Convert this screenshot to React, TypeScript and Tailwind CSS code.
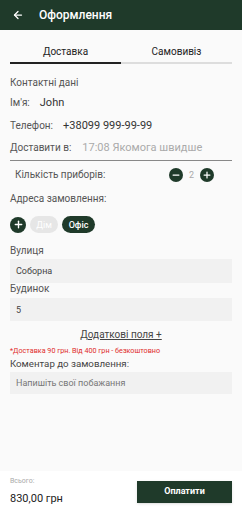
import { ArrowLeft, Plus, Minus } from "lucide-react";

function Circle({ children, size = "w-[14px] h-[14px]" }: { children: React.ReactNode; size?: string }) {
  return (
    <span className={`flex ${size} items-center justify-center rounded-full bg-[#1f3a2a] text-white`}>
      {children}
    </span>
  );
}

export default function App() {
  return (
    <div className="flex h-[512px] w-[242px] flex-col bg-[#fafafa] text-[#333]" style={{ fontFamily: "Roboto, 'Noto Sans', sans-serif" }}>
      <div className="flex h-[30px] items-center bg-[#1f3a2a] px-[12px] text-white">
        <ArrowLeft size={12} strokeWidth={2.5} />
        <span className="ml-[15px] text-[12px] font-medium">Оформлення</span>
      </div>

      <div className="mx-[10px] mt-[14px] flex">
        <div className="flex-1 border-b-2 border-[#222] pb-[3px] text-center text-[10px] text-[#222]">Доставка</div>
        <div className="flex-1 border-b-2 border-[#ddd] pb-[3px] text-center text-[10px] text-[#222]">Самовивіз</div>
      </div>

      <div className="mx-[10px] mt-[12px] flex flex-col text-[10px] leading-[14px] text-[#555]">
        <div className="h-[14px]">Контактні дані</div>
        <div className="mt-[6px] flex h-[14px] items-center">
          <span>Ім'я:</span>
          <span className="ml-[10px] text-[11px] text-[#333]">John</span>
        </div>
        <div className="mt-[9px] flex h-[14px] items-center">
          <span>Телефон:</span>
          <span className="ml-[10px] text-[11px] text-[#333]">+38099 999-99-99</span>
        </div>
        <div className="mt-[8px] flex h-[14px] items-center">
          <span>Доставити в:</span>
          <span className="ml-[11px] text-[11px] text-[#aaa]">17:08 Якомога швидше</span>
        </div>
        <div className="mt-[5px] border-b border-[#888]" />

        <div className="mt-[6px] flex h-[16px] items-center pl-[5px]">
          <span className="flex-1">Кількість приборів:</span>
          <div className="mr-[18px] flex items-center gap-[6px]">
            <Circle><Minus size={10} strokeWidth={3} /></Circle>
            <span className="text-[9px] text-[#aaa]">2</span>
            <Circle><Plus size={10} strokeWidth={3} /></Circle>
          </div>
        </div>

        <div className="mt-[9px] h-[14px]">Адреса замовлення:</div>
        <div className="mt-[10px] flex items-center gap-[4px]">
          <Circle size="w-[16px] h-[16px]"><Plus size={11} strokeWidth={3} /></Circle>
          <span className="flex h-[17px] w-[28px] items-center justify-center rounded-full bg-[#e6e6e6] text-[9px] text-white">Дім</span>
          <span className="flex h-[17px] w-[33px] items-center justify-center rounded-full bg-[#1f3a2a] text-[9px] font-medium text-white">Офіс</span>
        </div>

        <div className="mt-[11px] h-[14px]">Вулиця</div>
        <div className="mt-[1px] flex h-[24px] items-center bg-[#f1f1f1] px-[6px] text-[9px] text-[#444]">Соборна</div>
        <div className="h-[12px] leading-[12px]">Будинок</div>
        <div className="mt-[3px] flex h-[23px] items-center bg-[#f1f1f1] px-[6px] text-[9px] text-[#444]">5</div>

        <div className="mt-[8px] h-[12px] text-center leading-[12px] text-[#444] underline">Додаткові поля +</div>
        <div className="mt-[5px] h-[10px] text-[7.2px] leading-[10px] text-[#e02a2a]">*Доставка 90 грн. Від 400 грн - безкоштовно</div>
        <div className="mt-[1px] h-[13px] text-[9.7px] leading-[13px] text-[#444]">Коментар до замовлення:</div>
        <div className="mt-[2px] flex h-[22px] items-center bg-[#f1f1f1] px-[6px] text-[9px] text-[#777]">Напишіть свої побажання</div>
      </div>

      <div className="mt-auto flex h-[41px] items-center justify-between bg-white pl-[10px] pr-[10px]">
        <div className="flex flex-col">
          <span className="text-[7px] text-[#aaa]">Всього:</span>
          <span className="mt-[4px] text-[11px] text-[#222]">830,00 грн</span>
        </div>
        <button className="h-[22px] w-[95px] bg-[#1f3a2a] text-[9px] font-bold text-white shadow-sm">Оплатити</button>
      </div>
    </div>
  );
}
